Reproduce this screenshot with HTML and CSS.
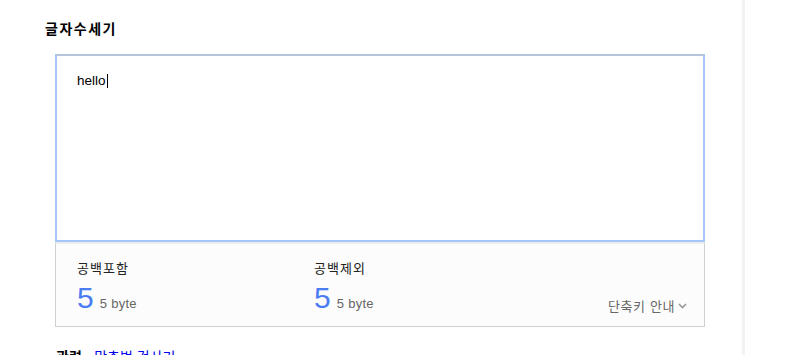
FILE: index.html
```html
<!DOCTYPE html>
<html lang="ko">
<head>
<meta charset="utf-8">
<link rel="stylesheet" href="styles.css">
</head>
<body>
<div class="page">
  <main class="main">
    <h2 class="title">글자수세기</h2>
    <div class="counter">
      <div class="editor"><span class="text">hello</span><span class="caret"></span></div>
      <div class="stats">
        <div class="stat">
          <div class="label">공백포함</div>
          <div class="value"><span class="num">5</span><span class="byte">5 byte</span></div>
        </div>
        <div class="stat">
          <div class="label">공백제외</div>
          <div class="value"><span class="num">5</span><span class="byte">5 byte</span></div>
        </div>
        <div class="shortcut">단축키 안내<svg class="chev" width="9" height="6" viewBox="0 0 9 6"><path d="M1 1l3.5 3.5L8 1" fill="none" stroke="#999" stroke-width="1.6"/></svg></div>
      </div>
    </div>
    <div class="related"><strong>관련</strong> · <a href="#">맞춤법 검사기</a></div>
  </main>
  <aside class="side"></aside>
</div>
</body>
</html>
```

FILE: styles.css
```css
html, body {
  margin: 0;
  padding: 0;
  background: #fff;
  font-family: "Liberation Sans", "Noto Sans CJK KR", sans-serif;
  color: #000;
}
.page {
  display: flex;
  height: 355px;
  overflow: hidden;
}
.main {
  width: 742px;
  padding: 19px 0 0 45px;
  box-sizing: border-box;
}
.side {
  width: 3px;
  background: #f2f2f2;
  flex: none;
}
.title {
  margin: 0;
  font-size: 14px;
  font-weight: bold;
  line-height: 20px;
  letter-spacing: 1.5px;
}
.counter {
  margin: 15px 0 0 10px;
  width: 650px;
}
.editor {
  height: 188px;
  box-sizing: border-box;
  border: 2px solid #a3c6fb;
  border-top-color: #b7c5da;
  padding: 17px 20px;
  font-size: 13.5px;
  line-height: 16px;
  display: flex;
  align-items: flex-start;
}
.caret {
  display: inline-block;
  width: 1px;
  height: 14px;
  margin-top: 1px;
  margin-left: 1px;
  background: #000;
}
.stats {
  height: 85px;
  box-sizing: border-box;
  background: #fcfcfc;
  border: 1px solid #d0d0d0;
  border-top: 2px solid #ececec;
  display: flex;
  align-items: flex-start;
  padding: 16px 0 0 21px;
}
.stat {
  width: 237px;
}
.label {
  font-size: 13px;
  line-height: 18px;
  color: #222;
  letter-spacing: 1px;
}
.value {
  display: flex;
  align-items: baseline;
  margin-top: 5px;
}
.num {
  font-size: 30px;
  line-height: 30px;
  color: #4a7cf2;
  font-family: "Liberation Sans", sans-serif;
}
.byte {
  font-size: 13px;
  color: #666;
  margin-left: 6px;
  letter-spacing: 0.3px;
}
.shortcut {
  margin-left: auto;
  margin-top: 36px;
  margin-right: 17px;
  font-size: 13px;
  color: #666;
  letter-spacing: 0.6px;
  display: flex;
  align-items: center;
  gap: 3px;
}
.related {
  margin: 21px 0 0 11px;
  font-size: 14px;
  line-height: 18px;
}
.related a {
  color: #0000ee;
  text-decoration: none;
}
```
